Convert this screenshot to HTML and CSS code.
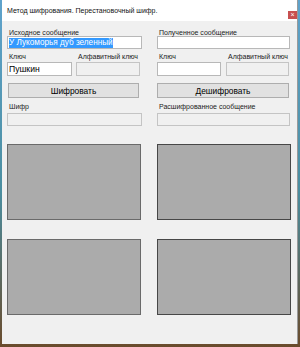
FILE: index.html
```html
<!DOCTYPE html>
<html lang="ru">
<head>
    <meta charset="UTF-8">
    <title>Метод шифрования. Перестановочный шифр.</title>
    <link rel="stylesheet" href="styles.css">
</head>
<body>
    <div class="screen">
        <div class="window">
            <div class="titlebar">
                <span class="title">Метод шифрования. Перестановочный шифр.</span>
                <span class="close">&#215;</span>
            </div>

            <div class="client">
                <div class="columns">
                    <div class="column left">
                        <label class="lbl">Исходное сообщение</label>
                        <div class="box"><span class="sel">У Лукоморья дуб зеленный</span></div>

                        <div class="keyrow">
                            <div class="field key">
                                <label class="lbl">Ключ</label>
                                <div class="box tall">Пушкин</div>
                            </div>
                            <div class="field alpha">
                                <label class="lbl">Алфавитный ключ</label>
                                <div class="box tall off"></div>
                            </div>
                        </div>

                        <button class="btn">Шифровать</button>

                        <label class="lbl gap">Шифр</label>
                        <div class="box off"></div>
                    </div>

                    <div class="column right">
                        <label class="lbl">Полученное сообщение</label>
                        <div class="box"></div>

                        <div class="keyrow">
                            <div class="field key">
                                <label class="lbl">Ключ</label>
                                <div class="box tall"></div>
                            </div>
                            <div class="field alpha">
                                <label class="lbl">Алфавитный ключ</label>
                                <div class="box tall off"></div>
                            </div>
                        </div>

                        <button class="btn">Дешифровать</button>

                        <label class="lbl gap">Расшифрованное сообщение</label>
                        <div class="box off"></div>
                    </div>
                </div>

                <div class="pictures">
                    <div class="pic"></div>
                    <div class="pic dark"></div>
                    <div class="pic"></div>
                    <div class="pic dark"></div>
                </div>
            </div>
        </div>
    </div>
</body>
</html>
```

FILE: styles.css
```css
body {
    margin: 0;
    font-family: "Liberation Sans", Arial, sans-serif;
}

.screen {
    width: 300px;
    height: 347px;
    display: flex;
    background: linear-gradient(#5fa3cc, #4b8ea0 55%, #6a4b2c);
    overflow: hidden;
}

.window {
    width: 295px;
    height: 344px;
    margin-left: 2px;
    border-right: 1px solid #9a9a9a;
    background-color: #f0f0f0;
    display: flex;
    flex-direction: column;
}

/* title bar */
.titlebar {
    height: 21px;
    background-color: white;
    display: flex;
    align-items: flex-start;
    justify-content: space-between;
    padding-left: 5px;
}

.title {
    font-size: 7px;
    line-height: 9px;
    margin-top: 6px;
    color: #111;
}

.close {
    width: 9px;
    height: 8px;
    background-color: #c75050;
    color: white;
    font-size: 7px;
    line-height: 8px;
    text-align: center;
    margin-top: 11px;
}

.client {
    padding: 7px 6px 0 5px;
}

.columns {
    display: flex;
    gap: 15px;
}

.column.left {
    width: 135px;
}

.column.right {
    width: 133px;
}

.lbl {
    display: block;
    font-size: 7px;
    line-height: 9px;
    height: 8px;
    color: #222;
    padding-left: 2px;
    white-space: nowrap;
}

.box {
    height: 11px;
    border: 1px solid #b8b8b8;
    background-color: white;
    font-size: 8.2px;
    line-height: 11px;
    padding-left: 1px;
    color: black;
    white-space: nowrap;
    overflow: hidden;
}

.box.tall {
    height: 12px;
    line-height: 12px;
    font-size: 8.6px;
}

.box.off {
    background-color: #f0f0f0;
    border-color: #c4c4c4;
}

.sel {
    display: inline-block;
    height: 10px;
    line-height: 10px;
    margin-top: 1px;
    vertical-align: top;
    background-color: #3399ff;
    color: white;
}

.keyrow {
    display: flex;
    gap: 4px;
    margin-top: 3px;
}

.right .keyrow {
    gap: 5px;
}

.left .field.key {
    width: 65px;
}

.left .field.alpha {
    width: 64px;
}

.right .field.key {
    width: 64px;
}

.right .field.alpha {
    width: 63px;
}

.field .box {
    margin-top: 2px;
}

.btn {
    display: block;
    width: 131px;
    height: 15px;
    margin: 7px 0 0 1px;
    padding: 0;
    border: 1px solid #adadad;
    background-color: #e1e1e1;
    font-family: "Liberation Sans", Arial, sans-serif;
    font-size: 8.4px;
    color: black;
}

.right .btn {
    width: 132px;
    margin-left: 0;
}

.lbl.gap {
    margin-top: 4px;
    margin-bottom: 3px;
}

.pictures {
    display: grid;
    grid-template-columns: 134px 134px;
    column-gap: 16px;
    row-gap: 19px;
    margin-top: 18px;
}

.pic {
    height: 74px;
    background-color: #ababab;
    border: 1px solid #6a6a6a;
}

.pic.dark {
    border-color: #474747;
}
```
